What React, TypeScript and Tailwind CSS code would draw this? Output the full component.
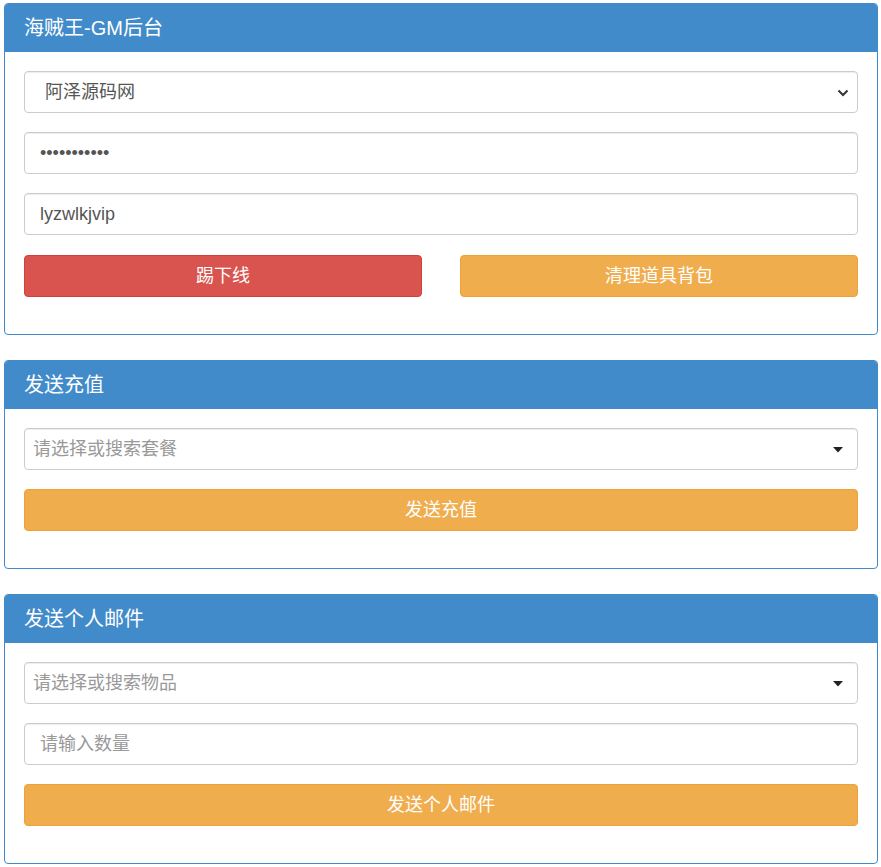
import React from "react";

const font = { fontFamily: '"Liberation Sans", "Noto Sans CJK SC", sans-serif' };

function Panel({ title, children }: { title: string; children: React.ReactNode }) {
  return (
    <div className="rounded-[4px] border border-[#428bca] bg-white overflow-hidden">
      <div className="h-[48px] bg-[#428bca] px-[19px] flex items-center text-white text-[20px]">{title}</div>
      <div className="px-[19px] pt-[19px] pb-[37px] flex flex-col gap-[19px]">{children}</div>
    </div>
  );
}

const boxCls =
  "h-[42px] w-full rounded-[4px] border border-[#ccc] bg-white shadow-[inset_0_1px_1px_rgba(0,0,0,0.075)] text-[18px] text-[#555] outline-none";

function Chevron() {
  return (
    <svg width="12" height="8" viewBox="0 0 12 8" className="absolute right-[8px] top-[17px]">
      <path d="M1.5 1.5 L6 6 L10.5 1.5" fill="none" stroke="#333" strokeWidth="2" />
    </svg>
  );
}

function Caret() {
  return (
    <svg width="10" height="6" viewBox="0 0 10 6" className="absolute right-[14px] top-[18px]">
      <path d="M0 0 H10 L5 5.5 Z" fill="#222" />
    </svg>
  );
}

function SearchSelect({ placeholder }: { placeholder: string }) {
  return (
    <div className={`${boxCls} relative flex items-center pl-[8px]`}>
      <span className="text-[#999]">{placeholder}</span>
      <Caret />
    </div>
  );
}

function Btn({ color, children }: { color: "red" | "orange"; children: React.ReactNode }) {
  const c =
    color === "red"
      ? "bg-[#d9534f] border-[#d43f3a]"
      : "bg-[#f0ad4e] border-[#eea236]";
  return (
    <button className={`h-[42px] w-full rounded-[4px] border text-white text-[18px] ${c}`}>{children}</button>
  );
}

export default function App() {
  return (
    <div className="bg-white min-h-screen pt-[3px] pl-[4px] pr-[3px] flex flex-col gap-[25px]" style={font}>
      <Panel title="海贼王-GM后台">
        <div className={`${boxCls} relative flex items-center pl-[20px]`}>
          <span>阿泽源码网</span>
          <Chevron />
        </div>
        <input type="password" readOnly value="abcdefghijk" className={`${boxCls} px-[15px]`} />
        <input type="text" readOnly value="lyzwlkjvip" className={`${boxCls} px-[15px]`} />
        <div className="grid grid-cols-2 gap-[38px] mt-[1px]">
          <Btn color="red">踢下线</Btn>
          <Btn color="orange">清理道具背包</Btn>
        </div>
      </Panel>
      <Panel title="发送充值">
        <SearchSelect placeholder="请选择或搜索套餐" />
        <Btn color="orange">发送充值</Btn>
      </Panel>
      <Panel title="发送个人邮件">
        <SearchSelect placeholder="请选择或搜索物品" />
        <input type="text" placeholder="请输入数量" className={`${boxCls} px-[15px] placeholder:text-[#999]`} />
        <Btn color="orange">发送个人邮件</Btn>
      </Panel>
    </div>
  );
}
